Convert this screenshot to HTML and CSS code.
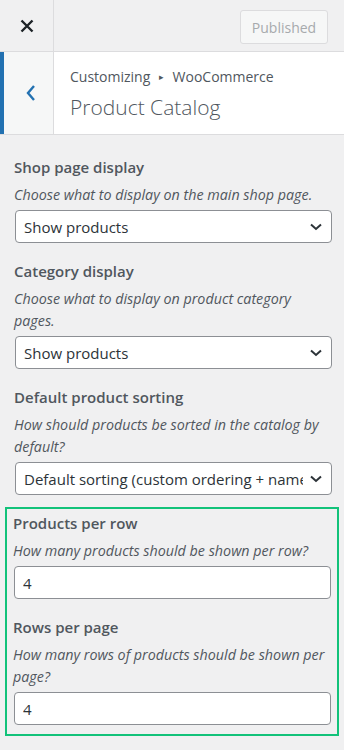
FILE: index.html
```html
<!DOCTYPE html>
<html lang="en">
<head>
  <meta charset="utf-8" />
  <title>Customize: Product Catalog</title>
  <link rel="stylesheet" href="styles.css">
</head>
<body>
  <div class="topbar">
    <div class="close-button">
      <svg width="14" height="14" viewBox="0 0 14 14"><path d="M1.5 1.5 L12.5 12.5 M12.5 1.5 L1.5 12.5" stroke="#1d2327" stroke-width="2.4" fill="none"/></svg>
    </div>
    <div class="topbar-actions">
      <div class="publish-button">Published</div>
    </div>
  </div>

  <div class="section-header">
    <div class="back-button">
      <svg width="12" height="18" viewBox="0 0 12 18"><path d="M9 2 L3 9 L9 16" stroke="#2271b1" stroke-width="2.4" fill="none"/></svg>
    </div>
    <div class="section-title">
      <span class="crumb">Customizing <span class="crumb-arrow">▸</span> WooCommerce</span>
      <h3 class="title">Product Catalog</h3>
    </div>
  </div>

  <div class="controls">
    <div class="control">
      <span class="control-title">Shop page display</span>
      <span class="control-description">Choose what to display on the main shop page.</span>
      <div class="select-wrap">
        <select class="field"><option>Show products</option></select>
        <svg class="chevron" width="12" height="8" viewBox="0 0 12 8"><path d="M1 1.5 L6 6 L11 1.5" stroke="#2c3338" stroke-width="2" fill="none"/></svg>
      </div>
    </div>

    <div class="control">
      <span class="control-title">Category display</span>
      <span class="control-description">Choose what to display on product category pages.</span>
      <div class="select-wrap">
        <select class="field"><option>Show products</option></select>
        <svg class="chevron" width="12" height="8" viewBox="0 0 12 8"><path d="M1 1.5 L6 6 L11 1.5" stroke="#2c3338" stroke-width="2" fill="none"/></svg>
      </div>
    </div>

    <div class="control">
      <span class="control-title">Default product sorting</span>
      <span class="control-description">How should products be sorted in the catalog by default?</span>
      <div class="select-wrap">
        <select class="field"><option>Default sorting (custom ordering + name)</option></select>
        <svg class="chevron" width="12" height="8" viewBox="0 0 12 8"><path d="M1 1.5 L6 6 L11 1.5" stroke="#2c3338" stroke-width="2" fill="none"/></svg>
      </div>
    </div>

    <div class="highlight">
      <div class="control">
        <span class="control-title">Products per row</span>
        <span class="control-description">How many products should be shown per row?</span>
        <input class="field" type="number" value="4">
      </div>

      <div class="control">
        <span class="control-title">Rows per page</span>
        <span class="control-description">How many rows of products should be shown per page?</span>
        <input class="field" type="number" value="4">
      </div>
    </div>
  </div>
</body>
</html>
```

FILE: styles.css
```css
*, *::before, *::after {
  box-sizing: border-box;
}

body {
  margin: 0;
  background: #f0f0f1;
  font-family: "Open Sans", "Noto Sans", sans-serif;
  color: #3c434a;
  overflow: hidden;
}

/* top bar */

.topbar {
  display: flex;
  height: 52px;
  border-bottom: 1px solid #dcdcde;
}

.close-button {
  width: 54px;
  display: flex;
  align-items: center;
  justify-content: center;
  border-right: 1px solid #dcdcde;
}

.topbar-actions {
  flex: 1;
  display: flex;
  justify-content: flex-end;
  align-items: flex-start;
  padding: 10px 16px 0 0;
}

.publish-button {
  height: 34px;
  width: 88px;
  display: flex;
  align-items: center;
  justify-content: center;
  font-size: 14px;
  color: #a7aaad;
  background: #f6f7f7;
  border: 1px solid #dcdcde;
  border-radius: 3px;
}

/* section header */

.section-header {
  display: flex;
  height: 83px;
  background: white;
  border-bottom: 1px solid #dcdcde;
}

.back-button {
  width: 54px;
  display: flex;
  align-items: center;
  justify-content: center;
  padding-left: 4px;
  background: #f6f7f7;
  border-left: 4px solid #2271b1;
  border-right: 1px solid #dcdcde;
}

.section-title {
  padding: 13px 0 0 16px;
}

.crumb {
  display: block;
  font-size: 14px;
  line-height: 24px;
  color: #50575e;
}

.crumb-arrow {
  font-size: 9px;
  position: relative;
  top: -2px;
  margin: 0 5px;
}

.title {
  margin: 0;
  font-size: 21px;
  font-weight: 300;
  line-height: 32px;
  color: #50575e;
}

/* controls */

.controls {
  padding: 20px 12px 0 15px;
}

.control + .control {
  margin-top: 16px;
}

.control-title {
  display: block;
  font-size: 15px;
  font-weight: 600;
  line-height: 24px;
  color: #50575e;
  margin-left: -1px;
}

.control-description {
  display: block;
  font-size: 14.3px;
  font-style: italic;
  line-height: 22px;
  color: #50575e;
  margin: 5px 0 4px -1px;
}

.select-wrap {
  position: relative;
}

.field {
  display: block;
  width: 100%;
  height: 33px;
  margin: 0;
  padding: 0 28px 0 8px;
  font-family: inherit;
  font-size: 15px;
  color: #2c3338;
  background: white;
  border: 1px solid #8c8f94;
  border-radius: 4px;
  appearance: none;
  -webkit-appearance: none;
  -moz-appearance: textfield;
}

input.field::-webkit-inner-spin-button,
input.field::-webkit-outer-spin-button {
  -webkit-appearance: none;
  margin: 0;
}

.chevron {
  position: absolute;
  right: 10px;
  top: 13px;
  pointer-events: none;
}

.highlight {
  margin: 12px -7px 0 -10px;
  padding: 2px 6px 9px 7px;
  border: 2px solid #12c27a;
}
```
